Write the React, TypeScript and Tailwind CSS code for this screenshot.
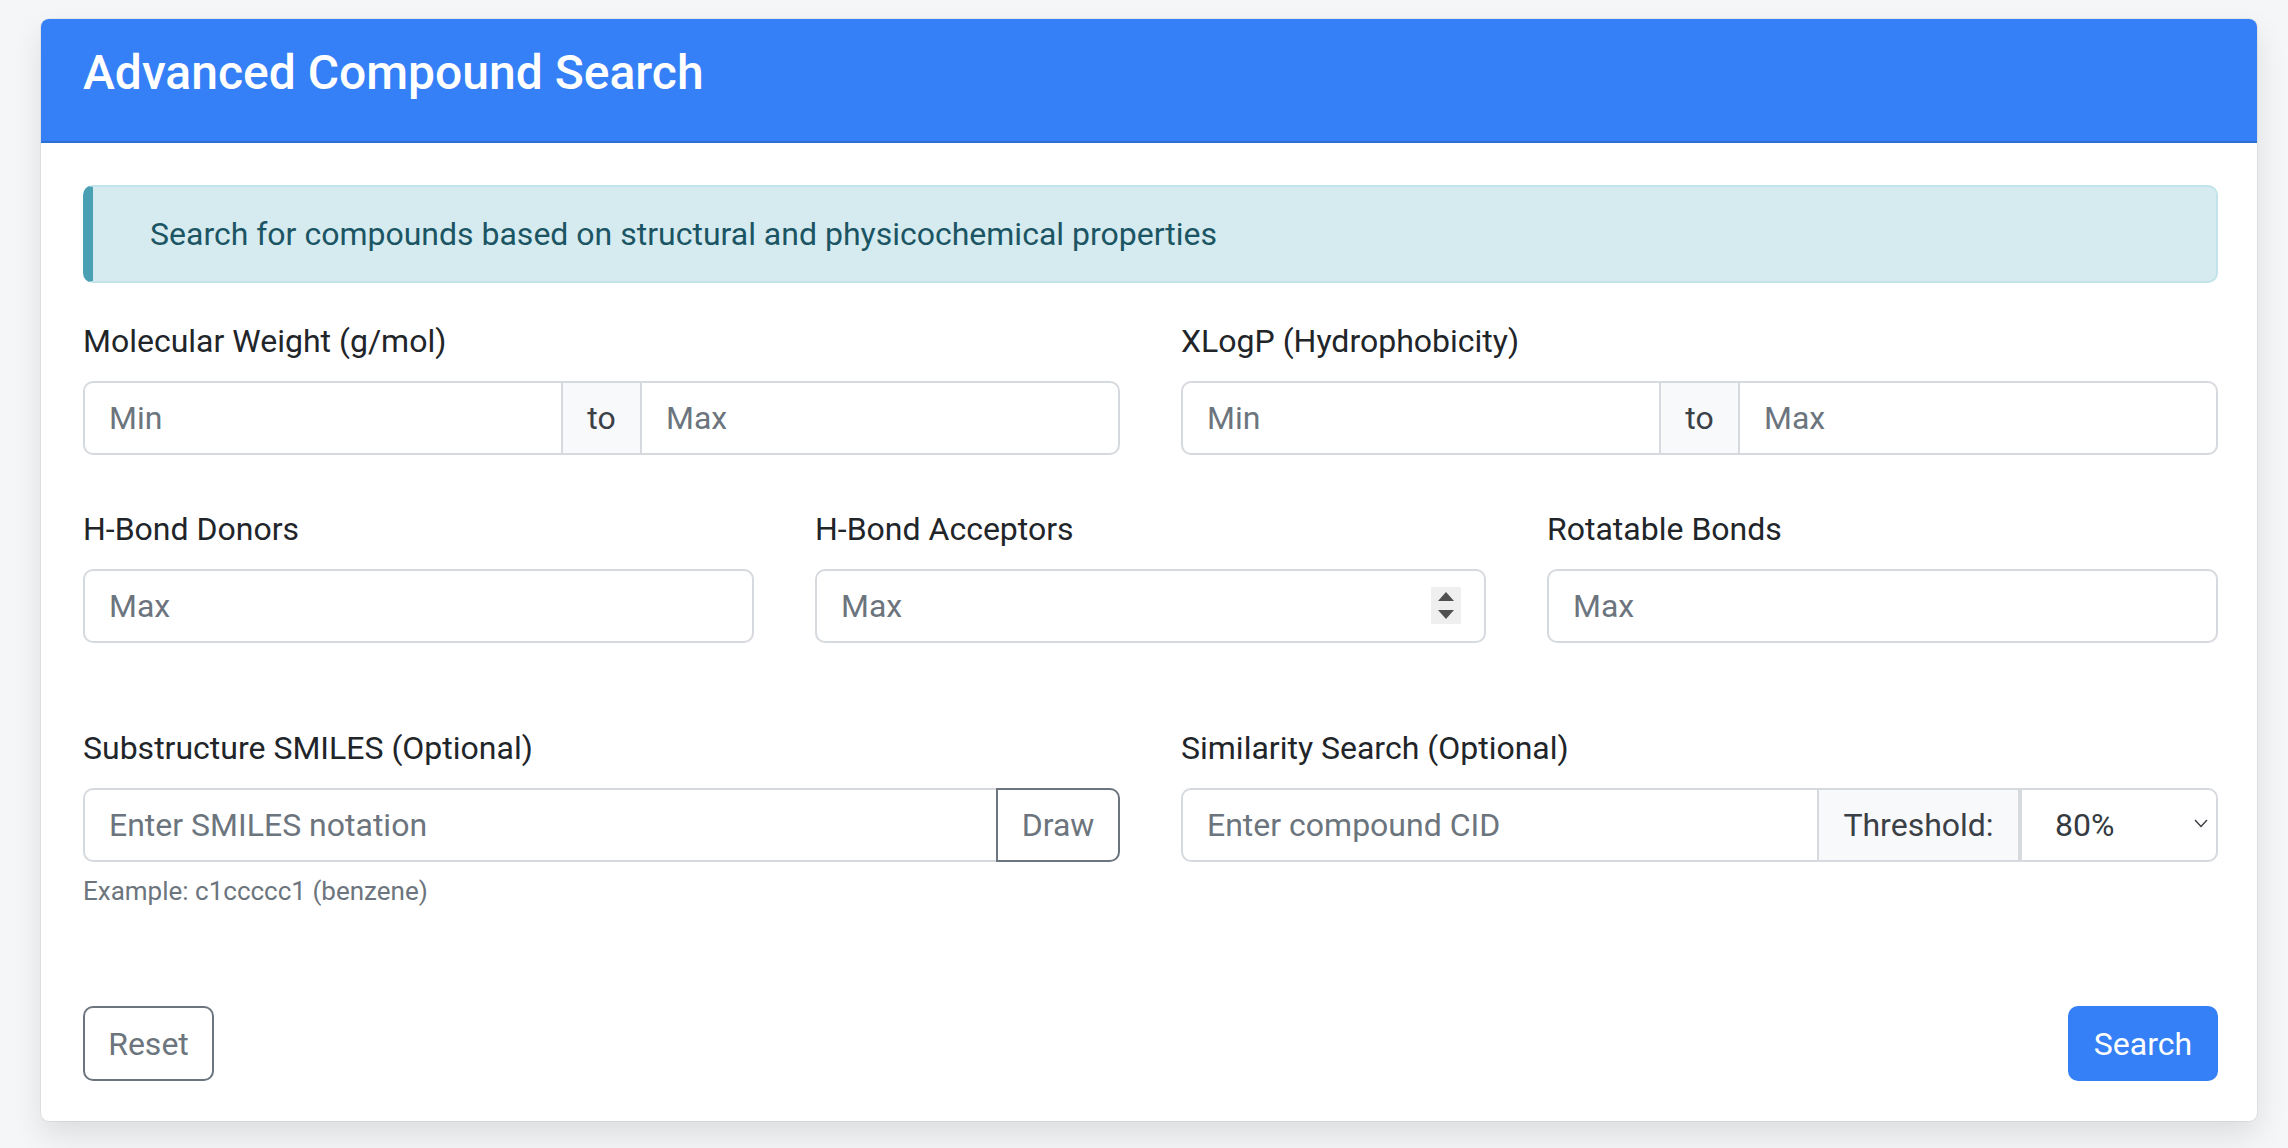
import React from "react";

const font = { fontFamily: "Roboto, 'Liberation Sans', Arial, sans-serif" };

function Label({ children }: { children: React.ReactNode }) {
  return (
    <div className="text-[32px] leading-[48px] text-[#212529] mb-[16px] whitespace-nowrap">
      {children}
    </div>
  );
}

function RangeGroup() {
  return (
    <div className="flex h-[74px]">
      <input
        type="text"
        placeholder="Min"
        className="flex-1 min-w-0 h-full border-2 border-[#d6d9dd] rounded-l-[10px] px-[24px] text-[32px] text-[#212529] placeholder:text-[#6c757d] outline-none bg-white"
      />
      <div className="h-full w-[77px] flex items-center justify-center border-y-2 border-[#d6d9dd] bg-[#f8f9fa] text-[32px] text-[#3b4046]">
        to
      </div>
      <input
        type="text"
        placeholder="Max"
        className="flex-1 min-w-0 h-full border-2 border-[#d6d9dd] rounded-r-[10px] px-[24px] text-[32px] text-[#212529] placeholder:text-[#6c757d] outline-none bg-white"
      />
    </div>
  );
}

function SingleInput({ spinner }: { spinner?: boolean }) {
  return (
    <div className="relative h-[74px]">
      <input
        type="text"
        placeholder="Max"
        className="w-full h-full border-2 border-[#d6d9dd] rounded-[10px] px-[24px] text-[32px] text-[#212529] placeholder:text-[#6c757d] outline-none bg-white"
      />
      {spinner && (
        <div className="absolute right-[25px] top-[18px] w-[30px] h-[37px] bg-[#efefef] flex flex-col items-center justify-center gap-[9px]">
          <svg width="16" height="9" viewBox="0 0 16 9">
            <polygon points="8,0 16,9 0,9" fill="#505050" />
          </svg>
          <svg width="16" height="9" viewBox="0 0 16 9">
            <polygon points="0,0 16,0 8,9" fill="#505050" />
          </svg>
        </div>
      )}
    </div>
  );
}

export default function App() {
  return (
    <div className="min-h-screen bg-[#f5f6f8] pt-[19px] pl-[41px] pb-[26px]" style={font}>
      <div className="w-[2216px] bg-white rounded-[8px] overflow-hidden shadow-[0_0_0_1px_rgba(0,0,0,0.05),0_14px_30px_rgba(0,0,0,0.10)]">
        <div className="bg-[#3580f6] px-[42px] pt-[24px] pb-[22px] border-b-2 border-[#2e6fd6]">
          <h3 className="text-[48px] leading-[60px] font-medium text-white mb-[16px] whitespace-nowrap">
            Advanced Compound Search
          </h3>
        </div>

        <div className="pl-[42px] pr-[39px] pt-[42px] pb-[40px]">
          <div className="h-[98px] flex items-center rounded-[10px] border-2 border-[#c3e3ea] border-l-[10px] border-l-[#4aa0b3] bg-[#d6ebf0] pl-[57px] text-[32px] leading-[48px] text-[#1b5563] mb-[34px]">
            Search for compounds based on structural and physicochemical properties
          </div>

          <div className="grid grid-cols-2 gap-x-[61px] mb-[50px]">
            <div>
              <Label>Molecular Weight (g/mol)</Label>
              <RangeGroup />
            </div>
            <div>
              <Label>XLogP (Hydrophobicity)</Label>
              <RangeGroup />
            </div>
          </div>

          <div className="grid grid-cols-3 gap-x-[61px] mb-[81px]">
            <div>
              <Label>H-Bond Donors</Label>
              <SingleInput />
            </div>
            <div>
              <Label>H-Bond Acceptors</Label>
              <SingleInput spinner />
            </div>
            <div>
              <Label>Rotatable Bonds</Label>
              <SingleInput />
            </div>
          </div>

          <div className="grid grid-cols-2 gap-x-[61px] items-start">
            <div>
              <Label>Substructure SMILES (Optional)</Label>
              <div className="flex h-[74px]">
                <input
                  type="text"
                  placeholder="Enter SMILES notation"
                  className="flex-1 min-w-0 h-full border-y-2 border-l-2 border-[#d6d9dd] rounded-l-[10px] px-[24px] text-[32px] text-[#212529] placeholder:text-[#6c757d] outline-none bg-white"
                />
                <button className="h-full w-[124px] border-2 border-[#6c757d] rounded-r-[10px] text-[32px] text-[#6c757d] bg-white">
                  Draw
                </button>
              </div>
              <div className="mt-[8px] text-[26px] leading-[42px] text-[#6c757d]">
                Example: c1ccccc1 (benzene)
              </div>
            </div>
            <div>
              <Label>Similarity Search (Optional)</Label>
              <div className="flex h-[74px]">
                <input
                  type="text"
                  placeholder="Enter compound CID"
                  className="flex-1 min-w-0 h-full border-2 border-[#d6d9dd] rounded-l-[10px] px-[24px] text-[32px] text-[#212529] placeholder:text-[#6c757d] outline-none bg-white"
                />
                <div className="h-full w-[201px] flex items-center justify-center border-y-2 border-r-2 border-[#d6d9dd] bg-[#f8f9fa] text-[32px] text-[#3b4046]">
                  Threshold:
                </div>
                <div className="relative h-full w-[198px]">
                  <select
                    defaultValue="80"
                    className="appearance-none w-full h-full border-y-2 border-r-2 border-l-2 border-[#d6d9dd] rounded-r-[10px] pl-[33px] text-[32px] text-[#343a40] bg-white outline-none"
                    style={font}
                  >
                    <option value="70">70%</option>
                    <option value="80">80%</option>
                    <option value="90">90%</option>
                  </select>
                  <svg
                    className="absolute right-[10px] top-[31px] pointer-events-none"
                    width="14"
                    height="9"
                    viewBox="0 0 14 9"
                  >
                    <polyline points="1,1 7,7.5 13,1" fill="none" stroke="#343a40" strokeWidth="1.3" />
                  </svg>
                </div>
              </div>
            </div>
          </div>

          <div className="flex justify-between mt-[94px]">
            <button className="h-[75px] w-[131px] border-2 border-[#6c757d] rounded-[10px] text-[32px] text-[#6c757d] bg-white">
              Reset
            </button>
            <button className="h-[75px] w-[150px] rounded-[10px] text-[32px] text-white bg-[#3580f6]">
              Search
            </button>
          </div>
        </div>
      </div>
    </div>
  );
}
